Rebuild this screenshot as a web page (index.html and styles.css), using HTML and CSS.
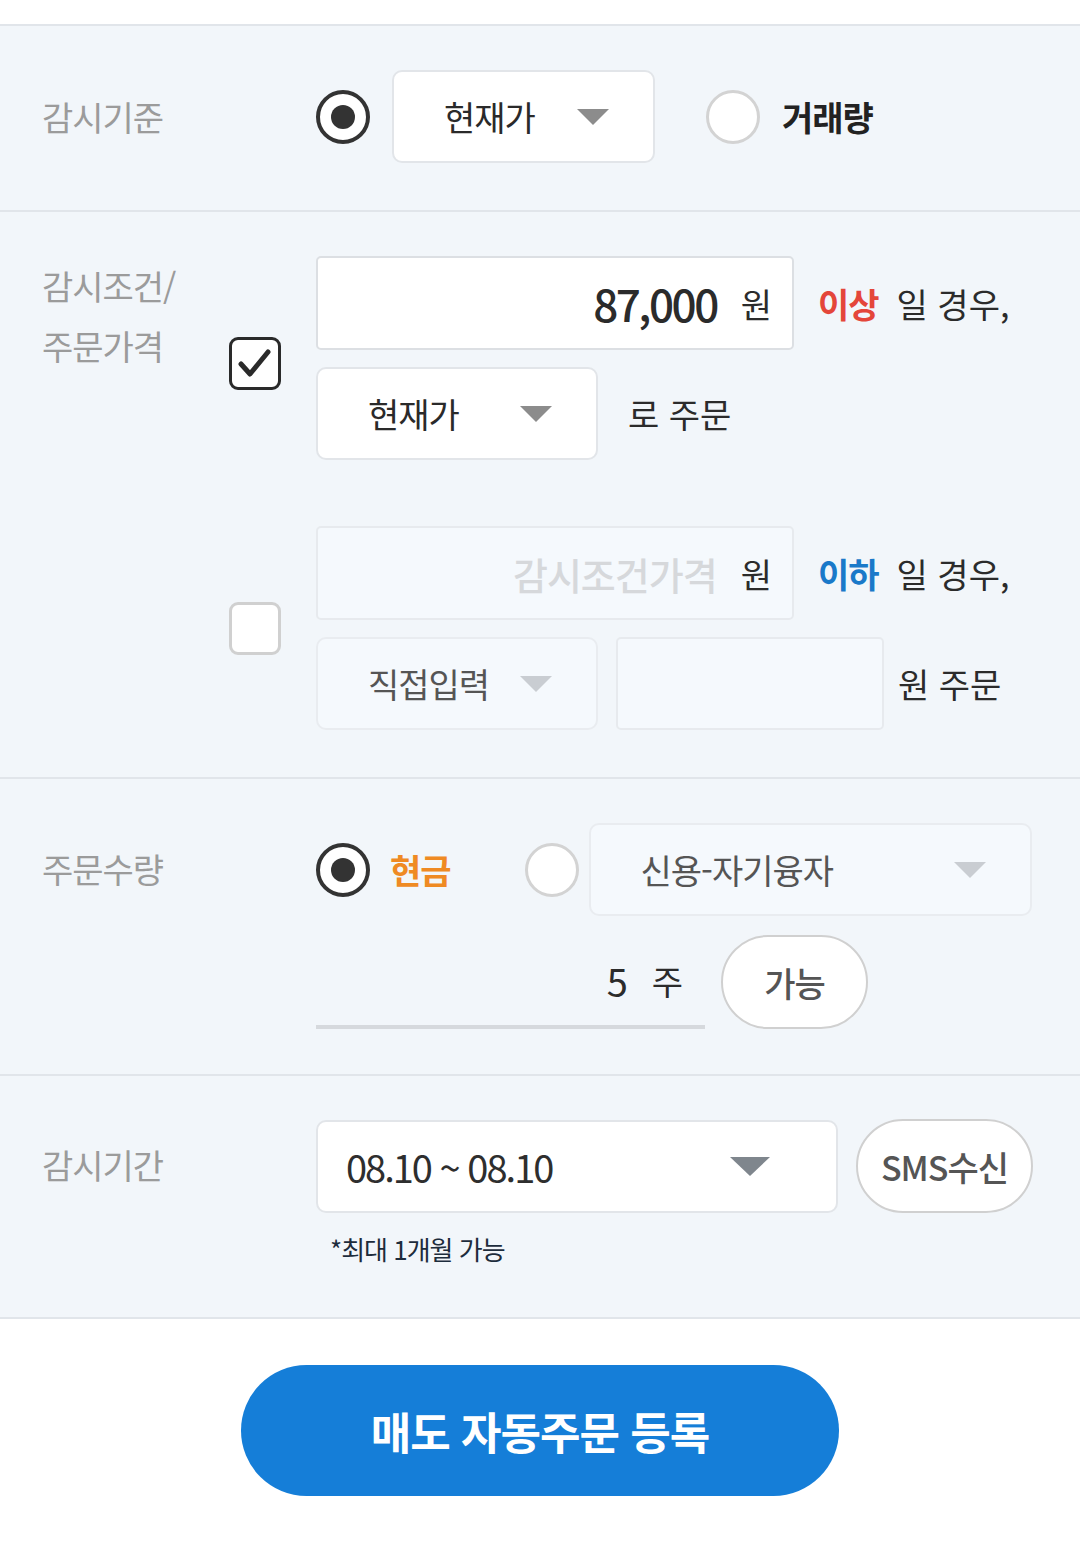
FILE: index.html
```html
<!DOCTYPE html>
<html lang="ko">
<head>
<meta charset="utf-8">
<title>매도 자동주문</title>
<link rel="stylesheet" href="styles.css">
</head>
<body>
<div class="top"></div>

<section class="sec sec-basis">
  <div class="label">감시기준</div>
  <div class="row">
    <span class="radio on"></span>
    <div class="select w263"><span class="sel-text">현재가</span><span class="tri"></span></div>
    <span class="radio gap-left51"></span>
    <span class="bold-dark">거래량</span>
  </div>
</section>

<section class="sec sec-cond">
  <div class="label label-narrow">감시조건/<br>주문가격</div>
  <div class="cond-groups">
    <div class="cond">
      <span class="check on"><svg viewBox="0 0 52 52" width="52" height="52"><polyline points="12,27 21,37 39,15" fill="none" stroke="#2a2a2a" stroke-width="5" stroke-linecap="round" stroke-linejoin="round"/></svg></span>
      <div class="stack">
        <div class="line">
          <div class="input w478"><span class="num">87,000</span><span class="unit">원</span></div>
          <span class="kw red">이상</span><span class="txt">일 경우,</span>
        </div>
        <div class="line">
          <div class="select w282"><span class="sel-text">현재가</span><span class="tri"></span></div>
          <span class="txt ml30">로 주문</span>
        </div>
      </div>
    </div>
    <div class="cond">
      <span class="check"></span>
      <div class="stack">
        <div class="line">
          <div class="input w478 disabled"><span class="ph">감시조건가격</span><span class="unit">원</span></div>
          <span class="kw blue">이하</span><span class="txt">일 경우,</span>
        </div>
        <div class="line">
          <div class="select w282 disabled"><span class="sel-text grey">직접입력</span><span class="tri light"></span></div>
          <div class="input w268 disabled ml18"></div>
          <span class="txt ml14">원 주문</span>
        </div>
      </div>
    </div>
  </div>
</section>

<section class="sec sec-qty">
  <div class="label label-row">주문수량</div>
  <div class="controls">
    <div class="row">
      <span class="radio on"></span>
      <span class="bold-orange">현금</span>
      <span class="radio ml74"></span>
      <div class="select w443 disabled ml10"><span class="sel-text grey">신용-자기융자</span><span class="tri light"></span></div>
    </div>
    <div class="row qty-row">
      <div class="underline"><span class="qty-num">5</span><span class="qty-unit">주</span></div>
      <button class="pill w147">가능</button>
    </div>
  </div>
</section>

<section class="sec sec-period">
  <div class="label label-row">감시기간</div>
  <div class="controls">
    <div class="row">
      <div class="select w522"><span class="date">08.10 ~ 08.10</span><span class="tri big"></span></div>
      <button class="pill w177 ml18">SMS수신</button>
    </div>
    <p class="note">*최대 1개월 가능</p>
  </div>
</section>

<div class="footer">
  <button class="submit">매도 자동주문 등록</button>
</div>
</body>
</html>
```

FILE: styles.css
```css
* { box-sizing: border-box; }
html, body { margin: 0; padding: 0; background: #fff; }
body {
  width: 1080px;
  font-family: "Noto Sans CJK KR", "Noto Sans", sans-serif;
  color: #2b2b2b;
}
.top { height: 24px; background: #fff; }

.sec {
  display: flex;
  background: #f2f6fa;
  border-top: 2px solid #e1e5ea;
}
.sec-basis { padding: 44px 0 47px; align-items: center; }
.sec-cond { padding: 44px 0 47px; }
.sec-qty { padding: 44px 0 45px; }
.sec-period { padding: 43px 0 0; border-bottom: 2px solid #e1e5ea; }

.label {
  width: 316px;
  padding-left: 42px;
  font-size: 34px;
  letter-spacing: -1px;
  color: #9b9b9b;
  line-height: 60px;
  flex-shrink: 0;
}
.label-narrow { width: 229px; line-height: 60px; padding-top: 0; }
.label-row { line-height: 92px; }

.controls { display: flex; flex-direction: column; }
.row { display: flex; flex-direction: row; align-items: center; }

.radio {
  width: 54px; height: 54px;
  border-radius: 50%;
  border: 3px solid #d3d3d3;
  background: #fff;
  position: relative;
  flex-shrink: 0;
}
.radio.on { border: 4px solid #333; }
.radio.on::after {
  content: "";
  position: absolute;
  left: 50%; top: 50%;
  width: 24px; height: 24px;
  margin: -12px 0 0 -12px;
  border-radius: 50%;
  background: #333;
}
.gap-left51 { margin-left: 51px; }
.ml74 { margin-left: 74px; }
.ml10 { margin-left: 10px; }
.ml18 { margin-left: 18px; }
.ml14 { margin-left: 14px; }
.ml30 { margin-left: 30px; }

.select {
  height: 93px;
  background: #fff;
  border: 2px solid #e2e5e9;
  border-radius: 10px;
  display: flex;
  align-items: center;
  justify-content: space-between;
  padding: 0 44px 0 50px;
  flex-shrink: 0;
}
.sec-basis .select { margin-left: 22px; }
.select.disabled { background: #f5f9fd; border-color: #e9ecf0; }
.w263 { width: 263px; }
.w282 { width: 282px; }
.w443 { width: 443px; }
.w522 { width: 522px; padding: 0 66px 0 28px; }
.sel-text { font-size: 34px; letter-spacing: -1px; color: #2a2a2a; }
.sel-text.grey { color: #555; }
.tri {
  width: 0; height: 0;
  border-left: 16px solid transparent;
  border-right: 16px solid transparent;
  border-top: 16px solid #8c8c8c;
}
.tri.light { border-top-color: #c9cdd2; }
.tri.big {
  border-left-width: 20px; border-right-width: 20px; border-top-width: 19px;
  border-top-color: #7f868d;
}
.date { font-size: 38px; letter-spacing: -2px; color: #2e2e2e; }

.bold-dark { margin-left: 22px; font-size: 34px; font-weight: 700; letter-spacing: -1px; color: #222; }
.bold-orange { margin-left: 20px; font-size: 34px; font-weight: 700; letter-spacing: -1px; color: #ef8a23; }

.cond-groups { display: flex; flex-direction: column; gap: 66px; }
.cond { display: flex; align-items: center; }
.check {
  width: 52px; height: 53px;
  border: 3px solid #d0d0d0;
  border-radius: 9px;
  background: #fff;
  margin-right: 35px;
  display: flex;
  align-items: center;
  justify-content: center;
  flex-shrink: 0;
}
.check.on { border-color: #2a2a2a; margin-top: 10px; }
.check svg { display: block; flex-shrink: 0; }
.stack { display: flex; flex-direction: column; gap: 17px; }
.line { display: flex; align-items: center; }

.input {
  height: 94px;
  background: #fff;
  border: 2px solid #dcdfe3;
  border-radius: 5px;
  display: flex;
  align-items: center;
  justify-content: flex-end;
  padding-right: 20px;
  flex-shrink: 0;
}
.input.disabled { background: #f5f9fd; border-color: #e7eaee; }
.w478 { width: 478px; }
.w268 { width: 268px; height: 93px; }
.num { font-size: 44px; letter-spacing: -2.5px; color: #2b2b2b; margin-right: 24px; font-weight: 500; }
.ph { font-size: 38px; letter-spacing: -1px; color: #d6d8db; margin-right: 24px; font-weight: 500; }
.unit { font-size: 34px; color: #2b2b2b; }
.kw { margin-left: 24px; font-size: 34px; font-weight: 700; letter-spacing: -1px; }
.red { color: #e4463a; }
.blue { color: #1a79c9; }
.txt { margin-left: 18px; font-size: 34px; color: #2b2b2b; }
.line .txt.ml14 { margin-left: 14px; }
.line .txt.ml30 { margin-left: 30px; }

.qty-row { margin-top: 19px; }
.underline {
  width: 389px;
  height: 94px;
  border-bottom: 4px solid #d6d9dd;
  display: flex;
  align-items: center;
  justify-content: flex-end;
  padding: 0 22px 0 0;
}
.qty-num { font-size: 38px; color: #2b2b2b; margin-right: 24px; }
.qty-unit { font-size: 34px; color: #2b2b2b; }
.pill {
  height: 94px;
  background: #fff;
  border: 2px solid #d0d0d0;
  border-radius: 47px;
  font-family: inherit;
  font-size: 34px;
  letter-spacing: -1px;
  color: #555;
  font-weight: 500;
  padding: 0;
  flex-shrink: 0;
}
.w147 { width: 147px; margin-left: 16px; }
.w177 { width: 177px; }

.note {
  margin: 21px 0 53px 14px;
  font-size: 26px;
  letter-spacing: -1px;
  color: #1d2c3c;
  line-height: 30px;
}

.footer {
  display: flex;
  justify-content: center;
  padding-top: 46px;
  padding-bottom: 50px;
}
.submit {
  width: 598px;
  height: 131px;
  border: none;
  border-radius: 66px;
  background: #157ed8;
  color: #fff;
  font-family: inherit;
  font-size: 44px;
  font-weight: 700;
  letter-spacing: -1px;
}
```
